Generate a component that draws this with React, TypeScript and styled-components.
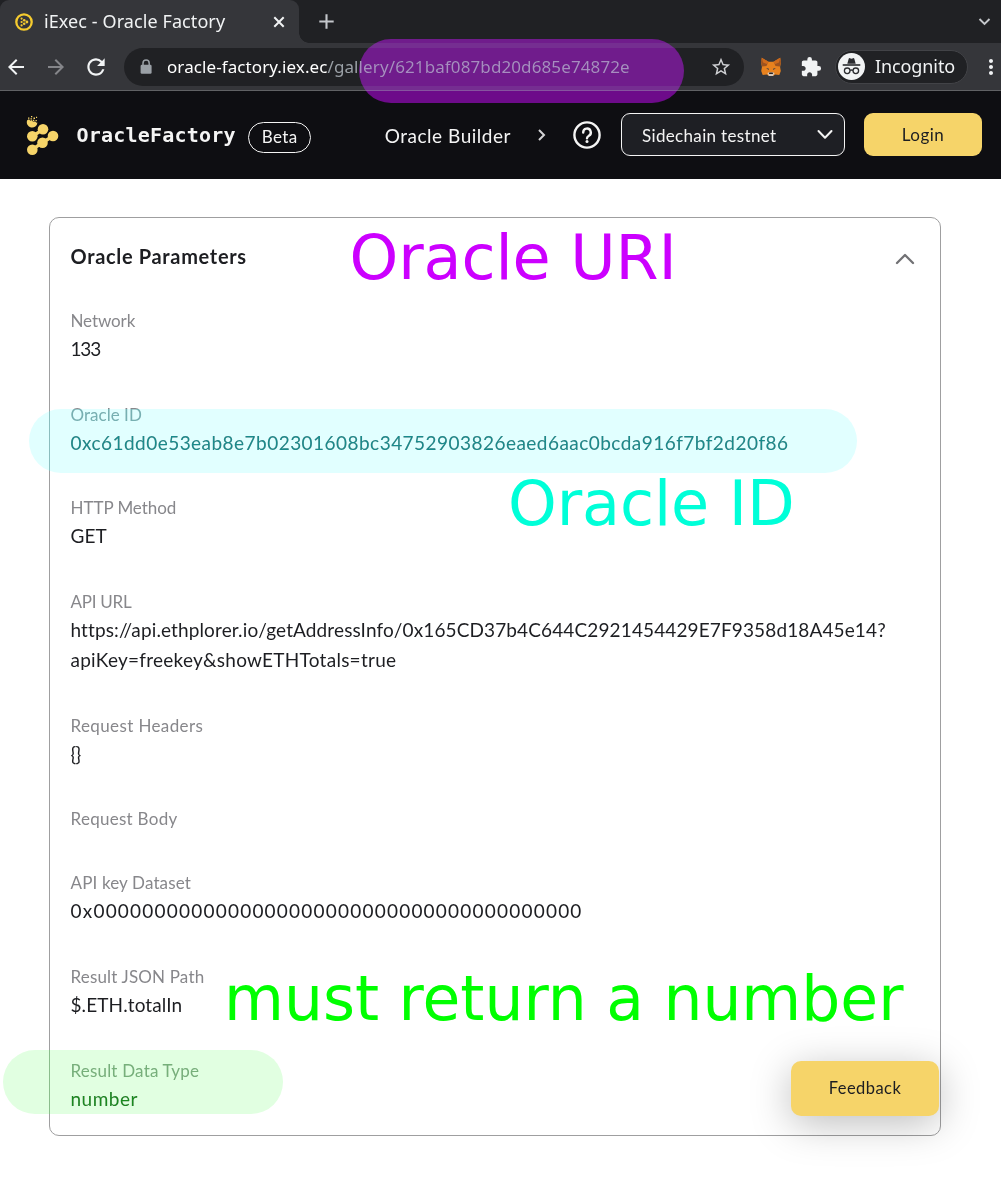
import React from 'react';
import styled, { createGlobalStyle } from 'styled-components';
import {
  MdArrowBack,
  MdArrowForward,
  MdExtension,
  MdMoreVert,
  MdRefresh,
  MdStarBorder,
} from 'react-icons/md';

const uiFont = '"Noto Sans", "Open Sans", sans-serif';
const siteFont = 'Lato, "Liberation Sans", sans-serif';

const GlobalStyle = createGlobalStyle`
  * { box-sizing: border-box; }
  body { margin: 0; background: #fff; }
  svg { display: block; flex: none; }
  button { border: 0; margin: 0; padding: 0; background: none; color: inherit; font: inherit; }
`;

const Screen = styled.div`
  position: relative;
  width: 1001px;
  height: 1179px;
  overflow: hidden;
  background: #fff;
  font-family: ${siteFont};
`;

/* Browser chrome */

const TabStrip = styled.div`
  display: flex;
  align-items: center;
  height: 43px;
  background: #202124;
  color: #c4c7cb;
  font-family: ${uiFont};
`;

const Tab = styled.div`
  position: relative;
  display: flex;
  align-items: center;
  width: 299px;
  height: 43px;
  padding: 0 13px 0 15px;
  background: #35363a;
  border-radius: 9px 9px 0 0;
  color: #f1f3f4;

  &::after {
    content: '';
    position: absolute;
    left: 100%;
    bottom: 0;
    width: 10px;
    height: 10px;
    background: radial-gradient(circle at 100% 0, transparent 9.5px, #35363a 10px);
  }
`;

const TabTitle = styled.span`
  flex: 1;
  margin: -2px 0 0 11px;
  font-size: 18px;
  line-height: 24px;
  letter-spacing: 0.09px;
  white-space: nowrap;
`;

const StripButton = styled.button<{ $left?: string; $right?: string }>`
  margin-left: ${p => p.$left ?? '0'};
  margin-right: ${p => p.$right ?? '0'};
`;

const Toolbar = styled.div`
  display: flex;
  align-items: center;
  height: 48px;
  padding-left: 4px;
  background: #35363a;
  border-bottom: 1px solid #606164;
  color: #f1f3f4;
  font-family: ${uiFont};
`;

const ToolButton = styled.button<{ $left?: number; $right?: number; $color?: string }>`
  flex: none;
  margin: 0 ${p => p.$right ?? 0}px 0 ${p => p.$left ?? 0}px;
  color: ${p => p.$color ?? 'inherit'};
`;

const Omnibox = styled.div`
  display: flex;
  flex: none;
  align-items: center;
  width: 620px;
  height: 38px;
  padding: 0 12px 0 14px;
  border-radius: 19px;
  background: #202124;
`;

const Url = styled.div`
  flex: 1;
  margin-left: 13px;
  color: #9aa0a6;
  font-size: 17px;
  line-height: 24px;
  letter-spacing: 0.11px;
  white-space: nowrap;
`;

const Host = styled.span`
  color: #fff;
  letter-spacing: 0.09px;
`;

const Profile = styled.div`
  display: flex;
  flex: none;
  align-items: center;
  width: 133px;
  height: 34px;
  margin-left: 13px;
  padding-left: 2px;
  border: 1px solid #424347;
  border-radius: 17px;
  background: #202124;
`;

const ProfileName = styled.span`
  margin: -1px 0 0 10px;
  font-size: 18px;
  line-height: 24px;
  letter-spacing: -0.1px;
`;

/* Site header */

const Header = styled.header`
  display: flex;
  align-items: center;
  height: 88px;
  padding: 0 19px 0 26px;
  background: #0e0e12;
  color: #f4f4f4;
`;

const Brand = styled.span`
  margin-left: 17.5px;
  font: bold 20px/28px 'DejaVu Sans Mono', monospace;
  letter-spacing: 0.2px;
`;

const BetaPill = styled.span`
  width: 63px;
  height: 31px;
  margin: 4px 0 0 12.5px;
  border: 1px solid #f4f4f4;
  border-radius: 16px;
  font-size: 17px;
  line-height: 27px;
  letter-spacing: 0.4px;
  text-align: center;
`;

const Nav = styled.nav`
  display: flex;
  align-items: center;
  margin-left: auto;
`;

const NavLink = styled.a`
  margin: 1px 26px 0 0;
  font-size: 19px;
  line-height: 28px;
  letter-spacing: 0.52px;
`;

const HelpButton = styled.button`
  margin: 0 20px 0 26px;
`;

const ChainSelect = styled.div`
  display: flex;
  align-items: center;
  justify-content: space-between;
  width: 224px;
  height: 43px;
  margin: -1px 19px 0 0;
  padding: 0 11px 0 20px;
  border: 1px solid #f4f4f4;
  border-radius: 9px;
  background: #1e1f24;
  font-size: 17px;
  letter-spacing: 0.34px;

  span { padding-top: 2px; }
`;

const YellowButton = styled.button`
  width: 118px;
  height: 43px;
  padding-bottom: 1px;
  border-radius: 9px;
  background: #f6d469;
  color: #1d1e22;
  font-size: 17px;
  letter-spacing: 0.5px;
`;

const LoginButton = styled(YellowButton)`
  margin-top: -1px;
`;

/* Parameters card */

const Main = styled.main`
  padding: 38px 60px 0 49px;
`;

const Card = styled.section`
  height: 919px;
  padding: 23px 20px 0 20.5px;
  border: 1px solid #9f9fa0;
  border-radius: 10px;
`;

const CardHead = styled.div`
  display: flex;
  align-items: center;
  justify-content: space-between;
  height: 30px;
  padding-right: 5px;
  margin-bottom: 37px;

  svg { margin-top: 5px; }
`;

const CardTitle = styled.h2`
  margin: 0;
  color: #1d1e22;
  font-size: 20px;
  font-weight: 700;
  line-height: 30px;
  letter-spacing: 0.67px;
`;

const Fields = styled.dl`
  display: flex;
  flex-direction: column;
  gap: 37.7px;
  margin: 0;
`;

const Label = styled.dt<{ $spacing: number }>`
  color: #87878b;
  font-size: 17px;
  line-height: 26px;
  letter-spacing: ${p => p.$spacing}px;
`;

const Value = styled.dd<{ $spacing: number }>`
  margin: 0;
  color: #1d1e22;
  font-size: 19px;
  line-height: 30px;
  letter-spacing: ${p => p.$spacing}px;
  white-space: nowrap;
`;

const Feedback = styled(YellowButton)`
  position: absolute;
  left: 791px;
  top: 1061px;
  width: 148px;
  height: 55px;
  padding-bottom: 2px;
  border-radius: 10px;
  font-size: 16.5px;
  letter-spacing: 0.45px;
  box-shadow: 0 8px 40px rgba(0, 0, 0, 0.26);
`;

/* Marker strokes and notes laid over the page */

const Marker = styled.div<{ $x: number; $y: number; $w: number; $tint: string }>`
  position: absolute;
  left: ${p => p.$x}px;
  top: ${p => p.$y}px;
  width: ${p => p.$w}px;
  height: 64px;
  border-radius: 32px;
  backdrop-filter: url(#${p => p.$tint});
`;

const Note = styled.div<{ $x: number; $y: number; $color: string; $size?: number; $spacing?: number }>`
  position: absolute;
  left: ${p => p.$x}px;
  top: ${p => p.$y}px;
  color: ${p => p.$color};
  font: ${p => p.$size ?? 62}px/72px 'DejaVu Sans', sans-serif;
  letter-spacing: ${p => p.$spacing ?? 0}px;
  white-space: nowrap;
`;

interface Line {
  text: string;
  spacing: number;
}

interface Field {
  label: string;
  spacing: number;
  lines: Line[];
}

const fields: Field[] = [
  { label: 'Network', spacing: -0.1, lines: [{ text: '133', spacing: -1.2 }] },
  {
    label: 'Oracle ID',
    spacing: 0.03,
    lines: [{ text: '0xc61dd0e53eab8e7b02301608bc34752903826eaed6aac0bcda916f7bf2d20f86', spacing: 0.461 }],
  },
  { label: 'HTTP Method', spacing: -0.05, lines: [{ text: 'GET', spacing: 0.1 }] },
  {
    label: 'API URL',
    spacing: -0.25,
    lines: [
      { text: 'https://api.ethplorer.io/getAddressInfo/0x165CD37b4C644C2921454429E7F9358d18A45e14?', spacing: 0.122 },
      { text: 'apiKey=freekey&showETHTotals=true', spacing: 0.26 },
    ],
  },
  { label: 'Request Headers', spacing: 0.38, lines: [{ text: '{}', spacing: -0.8 }] },
  { label: 'Request Body', spacing: 0.28, lines: [] },
  {
    label: 'API key Dataset',
    spacing: 0.14,
    lines: [{ text: '0x0000000000000000000000000000000000000000', spacing: 1.21 }],
  },
  { label: 'Result JSON Path', spacing: 0.17, lines: [{ text: '$.ETH.totalIn', spacing: 0.1 }] },
  { label: 'Result Data Type', spacing: 0.19, lines: [{ text: 'number', spacing: 0.5 }] },
];

/** Tints that mix a quarter of a pure colour into the backdrop, in linear light. */
const tints = [
  { id: 'violet', rgb: [0.151, 0, 0.25] },
  { id: 'cyan', rgb: [0, 0.25, 0.25] },
  { id: 'green', rgb: [0, 0.25, 0] },
];

const TintDefs = styled.svg`
  position: absolute;
`;

const Tints = () => (
  <TintDefs width="0" height="0">
    {tints.map(({ id, rgb: [r, g, b] }) => (
      <filter key={id} id={id} x="0" y="0" width="100%" height="100%" colorInterpolationFilters="linearRGB">
        <feColorMatrix values={`.75 0 0 0 ${r}  0 .75 0 0 ${g}  0 0 .75 0 ${b}  0 0 0 1 0`} />
      </filter>
    ))}
  </TintDefs>
);

const Favicon = () => (
  <svg width="18" height="18" viewBox="0 0 18 18">
    <circle cx="9" cy="9" r="7.7" fill="none" stroke="#f5cb2f" strokeWidth="2.3" />
    <g fill="#f5cb2f">
      <circle cx="6.6" cy="5.6" r="1.1" />
      <circle cx="9.2" cy="7.2" r="1.3" />
      <circle cx="6.6" cy="9" r="1.1" />
      <circle cx="11.9" cy="9" r="1.4" />
      <circle cx="9.2" cy="10.8" r="1.3" />
      <circle cx="6.6" cy="12.4" r="1.1" />
    </g>
  </svg>
);

const Stroke = ({ w, h, d, width = 2, color = 'currentColor', round = false }: {
  w: number; h: number; d: string; width?: number; color?: string; round?: boolean;
}) => (
  <svg width={w} height={h} viewBox={`0 0 ${w} ${h}`} fill="none" stroke={color} strokeWidth={width}
    strokeLinecap={round ? 'round' : 'butt'} strokeLinejoin={round ? 'round' : 'miter'}>
    <path d={d} />
  </svg>
);

const Lock = () => (
  <svg width="16" height="16" viewBox="0 0 16 16">
    <rect x="2.6" y="5.8" width="11" height="9" rx="1.3" fill="#9aa0a6" />
    <path d="M5 6.500V4.200a3.100 3.100 0 0 1 6.200 0v2.300" fill="none" stroke="#9aa0a6" strokeWidth="1.500" />
  </svg>
);

const Fox = () => (
  <svg width="20" height="20" viewBox="0 0 20 20">
    <path d="M.8.8 7.5 4.7h5L19.200.8 20 5l-.9 5 .7 4-1.500 4-4.100-.6L12 19H8l-2.200-1.600-4.100.6L.2 14l.7-4L0 5Z" fill="#e8821e" />
    <path d="M.8.8 7.300 5 5.500 9 1.100 9.600 0 5ZM19.200.8 12.700 5l1.800 4 4.400.6L20 5Z" fill="#9c5320" />
    <path d="m.8.8 6.700 4-1.100 2.400L2 5.500ZM19.200.8l-6.700 4 1.100 2.400L18 5.500Z" fill="#cf6b1c" />
    <path d="m5.200 11 2.800.7-.5 1.400ZM14.800 11l-2.800.7.5 1.400Z" fill="#31394a" />
    <path d="m6.400 16 2-.8h3.200l2 .8L12 19H8Z" fill="#d5c7ba" />
    <path d="M8.300 15.400h3.400l.3 1.700H8Z" fill="#2b2320" />
  </svg>
);

const IncognitoBadge = () => (
  <svg width="27" height="27" viewBox="0 0 27 27">
    <circle cx="13.5" cy="13.5" r="13.5" fill="#f1f3f4" />
    <path d="m9.3 10.7 1.4-5q.3-.8 1.2-.5l1.6.5 1.6-.5q.9-.3 1.2.5l1.4 5Z" fill="#2b2c30" />
    <path d="M4.7 11.2h17.6v1.6H4.7Z" fill="#2b2c30" />
    <g fill="none" stroke="#2b2c30" strokeWidth="1.3">
      <circle cx="9.2" cy="17.8" r="2.8" />
      <circle cx="17.8" cy="17.8" r="2.8" />
      <path d="M12 17.5q1.5-1 3 0" />
    </g>
  </svg>
);

const Logo = () => (
  <svg width="33" height="40" viewBox="0 0 33 40">
    <g stroke="#f6d469" strokeWidth="3.400">
      <path d="M6.3 21.3 17 14.3M6.3 34.7l10-7L27 21" />
    </g>
    <g fill="#f6d469">
      <circle cx="17" cy="14.3" r="5.300" />
      <circle cx="6.300" cy="21.300" r="5.300" />
      <circle cx="27" cy="21" r="5.300" />
      <circle cx="16.500" cy="27.800" r="5.300" />
      <circle cx="6.300" cy="34.700" r="5.300" />
      <path d="M1.200 5.200 3 4.200l1.300 1.600 1.200-.8 1.600 1.700 2-.3 1.500 1.400.8-.4A5.300 5.300 0 1 1 1.200 5.200Z" />
      <path d="M2 2.500h1.400v1.300H2ZM5 1h1.300v1.300H5ZM7.500 2.500H9v1.400H7.500ZM4.500 3.300h1.400v1.300H4.500ZM6.800 4.800h1.500v1.400H6.800ZM9.500 5h1.300v1.300H9.500ZM10 1.800h1.100v1.100H10Z" />
    </g>
  </svg>
);

const HelpIcon = () => (
  <svg width="28" height="28" viewBox="0 0 28 28" fill="none" stroke="#f4f4f4" strokeWidth="2.400">
    <circle cx="14" cy="14" r="12.600" />
    <path d="M10.200 11.500a3.800 3.800 0 1 1 5.700 3.200c-1.200.7-1.900 1.300-1.900 2.600" strokeLinecap="round" />
    <circle cx="14" cy="20.500" r="1.500" fill="#f4f4f4" stroke="none" />
  </svg>
);

const BrowserChrome = () => (
  <>
    <TabStrip>
      <Tab>
        <Favicon />
        <TabTitle>iExec - Oracle Factory</TabTitle>
        <StripButton aria-label="Close tab">
          <Stroke w={14} h={14} d="m2.300 2.300 9.400 9.400m0-9.400-9.400 9.400" />
        </StripButton>
      </Tab>
      <StripButton $left="20px" aria-label="New tab">
        <Stroke w={15} h={15} d="M7.500.3v14.400M.3 7.500h14.400" width={2.1} />
      </StripButton>
      <StripButton $left="auto" $right="10px" aria-label="Search tabs">
        <Stroke w={13} h={9} d="m1.500 2 5 5 5-5" width={1.9} />
      </StripButton>
    </TabStrip>
    <Toolbar>
      <ToolButton $right={16} aria-label="Back"><MdArrowBack size={24} /></ToolButton>
      <ToolButton $right={15} $color="#85868a" aria-label="Forward"><MdArrowForward size={24} /></ToolButton>
      <ToolButton $right={15} aria-label="Reload"><MdRefresh size={26} /></ToolButton>
      <Omnibox>
        <Lock />
        <Url><Host>oracle-factory.iex.ec</Host>/gallery/621baf087bd20d685e74872e</Url>
        <MdStarBorder size={22} color="#d0d2d5" />
      </Omnibox>
      <ToolButton $left={17} $right={19} aria-label="MetaMask"><Fox /></ToolButton>
      <ToolButton aria-label="Extensions"><MdExtension size={22} /></ToolButton>
      <Profile>
        <IncognitoBadge />
        <ProfileName>Incognito</ProfileName>
      </Profile>
      <ToolButton $left={11} aria-label="Menu"><MdMoreVert size={24} /></ToolButton>
    </Toolbar>
  </>
);

export default function App() {
  return (
    <Screen>
      <GlobalStyle />
      <Tints />
      <BrowserChrome />
      <Header>
        <Logo />
        <Brand>OracleFactory</Brand>
        <BetaPill>Beta</BetaPill>
        <Nav>
          <NavLink>Oracle Builder</NavLink>
          <Stroke w={10} h={14} d="m2 2 5 5-5 5" color="#d4d4d6" />
          <HelpButton aria-label="Help"><HelpIcon /></HelpButton>
          <ChainSelect>
            <span>Sidechain testnet</span>
            <Stroke w={16} h={11} d="m1.500 2 6.500 6.800L14.500 2" round />
          </ChainSelect>
          <LoginButton>Login</LoginButton>
        </Nav>
      </Header>
      <Main>
        <Card>
          <CardHead>
            <CardTitle>Oracle Parameters</CardTitle>
            <Stroke w={20} h={12} d="m2 10 8-8 8 8" width={2.3} color="#717174" round />
          </CardHead>
          <Fields>
            {fields.map(field => (
              <div key={field.label}>
                <Label $spacing={field.spacing}>{field.label}</Label>
                {field.lines.map(line => (
                  <Value key={line.text} $spacing={line.spacing}>{line.text}</Value>
                ))}
              </div>
            ))}
          </Fields>
        </Card>
      </Main>
      <Feedback>Feedback</Feedback>
      <Marker $x={359} $y={39} $w={324.5} $tint="violet" />
      <Marker $x={28.5} $y={408.5} $w={828} $tint="cyan" />
      <Marker $x={3} $y={1050} $w={280} $tint="green" />
      <Note $x={349.5} $y={222} $color="#cc00ff" $spacing={-0.1}>Oracle URI</Note>
      <Note $x={508} $y={468} $color="#00ffd8" $spacing={-0.1}>Oracle ID</Note>
      <Note $x={224} $y={963} $color="#00ff00" $size={61.5}>must return a number</Note>
    </Screen>
  );
}
